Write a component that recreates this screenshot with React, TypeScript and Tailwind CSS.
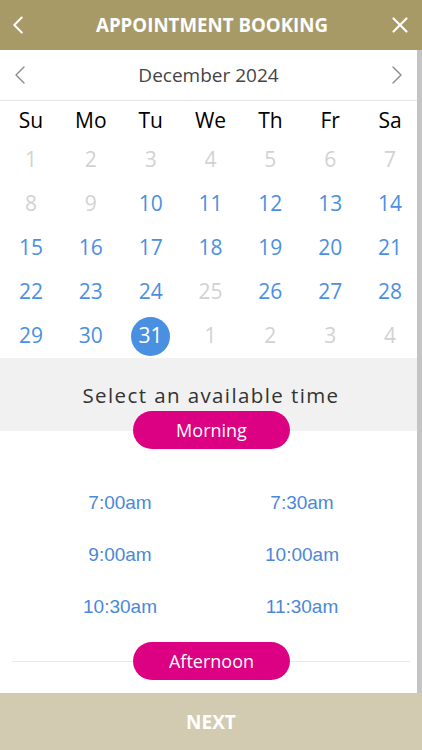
import { ChevronLeft, ChevronRight, X } from "lucide-react"

const font = { fontFamily: '"Open Sans", "Noto Sans", sans-serif' }

type Day = { n: number; on: boolean }

const weeks: Day[][] = [
  [1, 2, 3, 4, 5, 6, 7].map((n) => ({ n, on: false })),
  [8, 9, 10, 11, 12, 13, 14].map((n) => ({ n, on: n >= 10 })),
  [15, 16, 17, 18, 19, 20, 21].map((n) => ({ n, on: true })),
  [22, 23, 24, 25, 26, 27, 28].map((n) => ({ n, on: n !== 25 })),
  [
    { n: 29, on: true },
    { n: 30, on: true },
    { n: 31, on: true },
    { n: 1, on: false },
    { n: 2, on: false },
    { n: 3, on: false },
    { n: 4, on: false },
  ],
]

const times = ["7:00am", "7:30am", "9:00am", "10:00am", "10:30am", "11:30am"]

function Pill({ label }: { label: string }) {
  return (
    <div className="relative z-10 flex h-[38px] w-[157px] items-center justify-center rounded-full bg-[#dc0082] text-[18px] text-white">
      {label}
    </div>
  )
}

export default function App() {
  return (
    <div className="flex h-[750px] w-[422px] flex-col overflow-hidden bg-white" style={font}>
      <header className="flex h-[50px] shrink-0 items-center justify-between bg-[#a89a67] pl-[3px] pr-[9px] text-white">
        <ChevronLeft className="h-[30px] w-[30px]" strokeWidth={1.6} />
        <h1 className="ml-[4px] text-[18.7px] font-bold">APPOINTMENT BOOKING</h1>
        <X className="h-[26px] w-[26px]" strokeWidth={2} />
      </header>

      <div className="flex min-h-0 flex-1">
        <main className="w-[417px] shrink-0">
          <div className="flex h-[51px] items-center justify-between border-b border-[#e6e6e6] px-[4px] text-[#8a8a8a]">
            <ChevronLeft className="h-[32px] w-[32px]" strokeWidth={1} />
            <span className="text-[19px] text-[#444]">December 2024</span>
            <ChevronRight className="h-[32px] w-[32px]" strokeWidth={1} />
          </div>

          <div className="grid h-[37px] w-[420px] grid-cols-7 items-center pl-px pt-[3px] text-[21px] text-black">
            {["Su", "Mo", "Tu", "We", "Th", "Fr", "Sa"].map((d) => (
              <span key={d} className="text-center">
                {d}
              </span>
            ))}
          </div>

          {weeks.map((w, i) => (
            <div key={i} className="grid h-[44px] w-[420px] grid-cols-7 items-center pl-px text-[21px]">
              {w.map((d, j) =>
                i === 4 && d.n === 31 ? (
                  <span key={j} className="flex justify-center">
                    <span className="flex h-[39px] w-[39px] items-center justify-center rounded-full bg-[#4a90e2] text-white">
                      31
                    </span>
                  </span>
                ) : (
                  <span key={j} className={`text-center ${d.on ? "text-[#4a90e2]" : "text-[#d2d2d2]"}`}>
                    {d.n}
                  </span>
                )
              )}
            </div>
          ))}

          <div className="flex h-[73px] justify-center bg-[#f1f1f1] pl-[5px] pt-[22px] text-[20.5px] tracking-[1.4px] text-[#333]">
            Select an available time
          </div>
          <div className="-mt-[20px] flex justify-center pl-[6px]">
            <Pill label="Morning" />
          </div>

          <div
            className="grid w-[393px] grid-cols-2 pl-[29px] pt-[28px] text-[19px] text-[#4a88d8]"
            style={{ fontFamily: '"Liberation Sans", Arial, sans-serif' }}
          >
            {times.map((t) => (
              <span key={t} className="flex h-[52px] items-center justify-center">
                {t}
              </span>
            ))}
          </div>

          <div className="relative mt-[9px] flex justify-center pl-[6px]">
            <div className="absolute left-[12px] right-[7px] top-[19px] h-px bg-[#e8e8ee]" />
            <Pill label="Afternoon" />
          </div>
        </main>
        <div className="w-[5px] bg-[#c4c4c4]" />
      </div>

      <footer className="flex h-[57px] shrink-0 items-center justify-center bg-[#d3cbb1] pt-[2px] text-[19px] font-bold text-white">
        NEXT
      </footer>
    </div>
  )
}
